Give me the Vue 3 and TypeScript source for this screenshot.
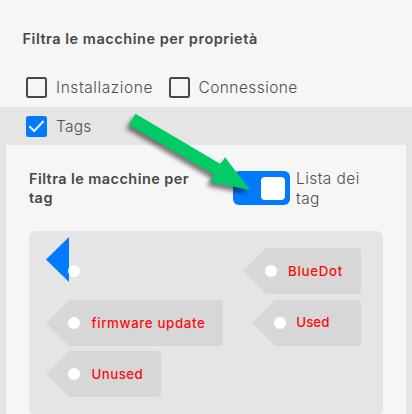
<script setup lang="ts">
interface Tag {
  name: string
  kind: string
}

const rows: Tag[][] = [
  [
    { name: '', kind: 'empty' },
    { name: 'BlueDot', kind: 'bluedot' },
  ],
  [
    { name: 'firmware update', kind: 'firmware' },
    { name: 'Used', kind: 'used' },
  ],
  [{ name: 'Unused', kind: 'unused' }],
]
</script>

<template>
  <main class="page">
    <h2 class="title">Filtra le macchine per proprietà</h2>
    <div class="options">
      <label class="option"><span class="box"></span><span class="label inst">Installazione</span></label>
      <label class="option"><span class="box"></span><span class="label conn">Connessione</span></label>
    </div>
    <section class="section">
      <label class="option tags-option">
        <span class="box checked">
          <svg viewBox="0 0 21 21" width="21" height="21">
            <path d="M3.3 10.2 8.2 15 17.6 5" fill="none" stroke="#f3f6fa" stroke-width="2" />
          </svg>
        </span>
        <span class="label tg">Tags</span>
      </label>
      <div class="panel">
        <div class="head">
          <h3 class="subtitle">Filtra le macchine per <br />tag</h3>
          <div class="toggle"><span class="knob"></span></div>
          <div class="toggle-label">Lista dei<br />tag</div>
        </div>
        <div class="list">
          <div v-for="(row, i) in rows" :key="i" class="row">
            <div v-for="tag in row" :key="tag.kind" class="tag" :class="tag.kind">
              <svg v-if="tag.kind === 'empty'" class="tip" viewBox="0 0 23 45" width="23" height="45">
                <path d="M23 0V45L0 22.5Z" fill="#007bff" />
              </svg>
              <svg v-else class="tip" viewBox="0 0 23 46" width="23" height="46">
                <path d="M23 0V46L0 23Z" fill="#d7d7d7" />
              </svg>
              <div class="body">
                <span class="dot"></span>
                <span class="name">{{ tag.name }}</span>
              </div>
            </div>
          </div>
        </div>
      </div>
    </section>
    <svg class="arrow" viewBox="0 0 412 414" width="412" height="414">
      <path d="M135.5 113.8 220.5 164 225 157.3 250 190 210 182 214 174.5 128.8 124.8Z" fill="#00cc66" />
    </svg>
  </main>
</template>

<style>
body {
  margin: 0;
  background: #f6f6f6;
  overflow: hidden;
}
</style>

<style scoped>
* {
  box-sizing: border-box;
}
.page {
  position: relative;
  width: 412px;
  height: 414px;
  padding-top: 29px;
  overflow: hidden;
  background: #f6f6f6;
  color: #484848;
  font-family: Inter, 'Noto Sans', sans-serif;
}
.title,
.subtitle {
  margin: 0;
  font-size: 14.5px;
  font-weight: 600;
  letter-spacing: 0.53px;
  white-space: nowrap;
}
.title {
  padding-left: 22.5px;
  height: 48px;
  line-height: 20px;
}
.options {
  display: flex;
  gap: 15px;
  height: 30px;
  padding-left: 26px;
}
.option {
  display: flex;
  height: 21px;
  align-items: center;
  gap: 9px;
}
.box {
  display: block;
  flex: none;
  width: 21px;
  height: 21px;
  border: 2px solid #484848;
  border-radius: 2.5px;
}
.box.checked {
  border: 0;
  background: #007bff;
}
.box svg {
  display: block;
}
.label,
.toggle-label {
  font-size: 15.5px;
  font-weight: 300;
  color: #505050;
  white-space: nowrap;
}
.label {
  line-height: 21px;
}
.inst {
  width: 97.5px;
  letter-spacing: 0.58px;
}
.conn {
  letter-spacing: 0.42px;
}
.tg {
  letter-spacing: 0.25px;
}
.section {
  height: 307px;
  padding: 9px 6px 0;
  background: #e5e5e5;
}
.tags-option {
  margin-left: 20px;
  height: 21px;
}
.panel {
  margin-top: 8px;
  height: 269px;
  padding: 26px 23px 0;
  background: #f6f6f6;
}
.head {
  display: flex;
  height: 60px;
}
.subtitle {
  width: 204px;
  margin-top: -2px;
  line-height: 19px;
  letter-spacing: 0.43px;
}
.toggle {
  flex: none;
  width: 57px;
  height: 34px;
  padding: 6px 5px 0 28px;
  border-radius: 6px;
  background: #007bff;
}
.knob {
  display: block;
  width: 24px;
  height: 23px;
  border-radius: 4px;
  background: #fff;
}
.toggle-label {
  margin: -2px 0 0 6px;
  line-height: 20px;
  letter-spacing: 0.42px;
}
.list {
  display: flex;
  flex-direction: column;
  gap: 5.5px;
  height: 184px;
  padding: 17px 22px 0 17px;
  border-radius: 6px;
  background: #e5e5e5;
}
.row {
  display: flex;
  justify-content: space-between;
  height: 46px;
}
.tag {
  display: flex;
  height: 46px;
}
.tip {
  display: block;
  flex: none;
}
.empty .tip {
  margin-top: -11px;
}
.body {
  display: flex;
  flex: 1;
  align-items: center;
  margin-left: -0.5px;
  background: #d7d7d7;
  border-radius: 0 3px 3px 0;
}
.empty .body {
  background: none;
}
.dot {
  flex: none;
  width: 12px;
  height: 12px;
  margin-left: -0.2px;
  border-radius: 50%;
  background: #fff;
}
.name {
  margin-left: 11.2px;
  color: #fb0d0d;
  font-size: 13.3px;
  font-weight: 500;
  line-height: 20px;
  white-space: nowrap;
}
.bluedot {
  width: 118.5px;
}
.bluedot .name {
  letter-spacing: 0.72px;
}
.firmware {
  width: 176.5px;
}
.firmware .name {
  letter-spacing: 0.62px;
}
.used {
  width: 109px;
}
.used .name {
  margin-left: 10px;
  padding-bottom: 2px;
}
.unused {
  width: 115px;
}
.unused .name {
  letter-spacing: 0.45px;
}
.arrow {
  position: absolute;
  left: 0;
  top: 0;
  filter: drop-shadow(-3px 4px 2px rgba(0, 0, 0, 0.5));
}
</style>
